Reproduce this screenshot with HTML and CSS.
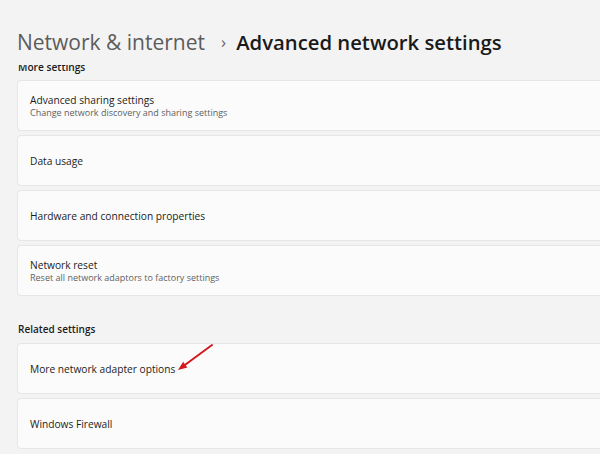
FILE: index.html
```html
<!DOCTYPE html>
<html>
<head>
  <meta charset="UTF-8">
  <title>Advanced network settings</title>
  <link rel="stylesheet" href="styles.css">
</head>
<body>
  <h1 class="crumbs">
    <span class="parent">Network &amp; internet</span>
    <span class="chev">&#x203A;</span>
    <span class="current">Advanced network settings</span>
  </h1>

  <div class="label clipped"><span>More settings</span></div>
  <div class="list">
    <div class="card">
      <div class="title">Advanced sharing settings</div>
      <div class="sub">Change network discovery and sharing settings</div>
    </div>
    <div class="card">
      <div class="title">Data usage</div>
    </div>
    <div class="card">
      <div class="title">Hardware and connection properties</div>
    </div>
    <div class="card">
      <div class="title">Network reset</div>
      <div class="sub">Reset all network adaptors to factory settings</div>
    </div>
  </div>

  <div class="label related">Related settings</div>
  <div class="list">
    <div class="card">
      <div class="title">More network adapter options</div>
      <svg class="arrow" width="40" height="32" viewBox="0 0 40 32">
        <line x1="37" y1="2" x2="10.5" y2="21.5" stroke="#d3191c" stroke-width="2" stroke-linecap="round"/>
        <polygon points="3,27 8.2,18.8 12.3,24.5" fill="#d3191c"/>
      </svg>
    </div>
    <div class="card">
      <div class="title">Windows Firewall</div>
    </div>
  </div>
</body>
</html>
```

FILE: styles.css
```css
body {
  margin: 0;
  padding: 0 0 0 17px;
  background: #f3f3f3;
  color: #1b1b1b;
  font-family: "Open Sans", "Noto Sans", sans-serif;
  overflow: hidden;
}
.crumbs {
  margin: 0;
  padding: 18px 0 0 0;
  height: 47px;
  display: flex;
  align-items: center;
  font-size: 21px;
  font-weight: 400;
  white-space: nowrap;
}
.parent {
  color: #5c5c5c;
}
.chev {
  color: #666;
  font-size: 17px;
  margin: 0 10px 0 16px;
}
.current {
  font-size: 20.3px;
  font-weight: 600;
  color: #1a1a1a;
}
.label {
  font-size: 10px;
  font-weight: 600;
  color: #1b1b1b;
}
.clipped {
  height: 9px;
  display: flex;
  align-items: flex-end;
  overflow: hidden;
  margin-left: 1px;
  font-size: 10.2px;
}
.clipped span {
  line-height: 14px;
  margin-bottom: 0;
}
.related {
  line-height: 16px;
  margin: 25px 0 5px 1px;
}
.list {
  display: flex;
  flex-direction: column;
  gap: 4px;
  margin-top: 6px;
}
.card {
  position: relative;
  height: 51px;
  box-sizing: border-box;
  background: #fbfbfb;
  border: 1px solid #e6e6e6;
  border-right: none;
  border-radius: 4px 0 0 4px;
  padding-left: 12px;
  display: flex;
  flex-direction: column;
  justify-content: center;
}
.title {
  font-size: 10.2px;
  color: #1b1b1b;
  line-height: 14px;
}
.sub {
  font-size: 9px;
  color: #5f5f5f;
  line-height: 12px;
}
.arrow {
  position: absolute;
  left: 157px;
  top: -1px;
}
```
